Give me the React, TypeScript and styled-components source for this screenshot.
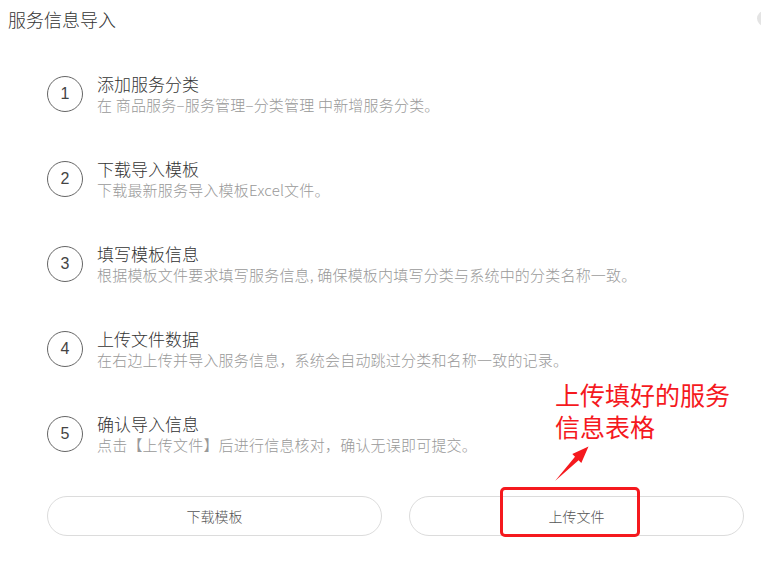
import React from "react";
import styled, { createGlobalStyle } from "styled-components";

type IStep = {
  title: string;
  desc: string;
};

const steps: IStep[] = [
  { title: "添加服务分类", desc: "在 商品服务–服务管理–分类管理 中新增服务分类。" },
  { title: "下载导入模板", desc: "下载最新服务导入模板Excel文件。" },
  { title: "填写模板信息", desc: "根据模板文件要求填写服务信息, 确保模板内填写分类与系统中的分类名称一致。" },
  { title: "上传文件数据", desc: "在右边上传并导入服务信息，系统会自动跳过分类和名称一致的记录。" },
  { title: "确认导入信息", desc: "点击【上传文件】后进行信息核对，确认无误即可提交。" },
];

const App: React.FC = () => {
  return (
    <Page>
      <GlobalStyle />
      <Header>服务信息导入</Header>
      <CloseDot />

      <StepList>
        {steps.map((s, index) => (
          <StepRow key={s.title}>
            <StepNumber>{index + 1}</StepNumber>
            <StepText>
              <StepTitle>{s.title}</StepTitle>
              <StepDesc>{s.desc}</StepDesc>
            </StepText>
          </StepRow>
        ))}
      </StepList>

      <ButtonRow>
        <PillButton>下载模板</PillButton>
        <PillButton>上传文件</PillButton>
      </ButtonRow>

      {/* screenshot annotation drawn on top */}
      <Note>
        <NoteLine>上传填好的服务</NoteLine>
        <NoteLine>信息表格</NoteLine>
      </Note>
      <Arrow width="45" height="45" viewBox="550 442 45 45">
        <polygon
          points="555,481 578.6,460.2 581.3,462.9 588.5,446.5 572.3,454.1 575,456.8"
          fill="#f5191e"
        />
      </Arrow>
      <Highlight />
    </Page>
  );
};

const GlobalStyle = createGlobalStyle`
  body {
    margin: 0;
    background: #fff;
    font-family: "Noto Sans CJK SC", "Noto Sans", sans-serif;
  }
`;

const Page = styled.div`
  position: relative;
  width: 761px;
  height: 561px;
  overflow: hidden;
  background: #fff;
  font-weight: 300;
`;

const Header = styled.div`
  padding: 9px 8px 0;
  font-size: 18px;
  line-height: 20px;
  color: #333;
`;

const CloseDot = styled.div`
  position: absolute;
  left: 757px;
  top: 11px;
  width: 15px;
  height: 15px;
  border-radius: 50%;
  background: #e4e4e4;
`;

const StepList = styled.div`
  display: flex;
  flex-direction: column;
  gap: 43px;
  padding: 44px 0 0 47px;
`;

const StepRow = styled.div`
  display: flex;
  align-items: center;
  height: 42px;
`;

const StepNumber = styled.div`
  box-sizing: border-box;
  width: 36px;
  height: 36px;
  flex: none;
  margin-right: 14px;
  border: 1px solid #666;
  border-radius: 50%;
  display: flex;
  align-items: center;
  justify-content: center;
  font-family: "Liberation Sans", Arial, sans-serif;
  font-weight: 400;
  font-size: 16px;
  color: #444;
`;

const StepText = styled.div`
  display: flex;
  flex-direction: column;
`;

const StepTitle = styled.div`
  font-size: 17px;
  line-height: 22px;
  color: #333;
`;

const StepDesc = styled.div`
  font-size: 15px;
  line-height: 20px;
  letter-spacing: 0.2px;
  color: #999;
  white-space: nowrap;
`;

const ButtonRow = styled.div`
  display: flex;
  gap: 27px;
  padding: 41px 0 0 47px;
`;

const PillButton = styled.button`
  box-sizing: border-box;
  width: 335px;
  height: 40px;
  border: 1px solid #dcdcdc;
  border-radius: 20px;
  background: #fff;
  font-family: inherit;
  font-weight: 300;
  font-size: 14px;
  color: #555;
  cursor: pointer;
`;

const Note = styled.div`
  position: absolute;
  left: 555px;
  top: 379px;
  display: flex;
  flex-direction: column;
  gap: 2px;
  color: #f5191e;
  white-space: nowrap;
`;

const NoteLine = styled.div`
  font-size: 25px;
  line-height: 30px;
  font-weight: 400;
`;

const Arrow = styled.svg`
  position: absolute;
  left: 550px;
  top: 442px;
`;

const Highlight = styled.div`
  position: absolute;
  left: 500px;
  top: 487px;
  box-sizing: border-box;
  width: 140px;
  height: 50px;
  border: 3px solid #f5191e;
  border-radius: 5px;
`;

export default App;
